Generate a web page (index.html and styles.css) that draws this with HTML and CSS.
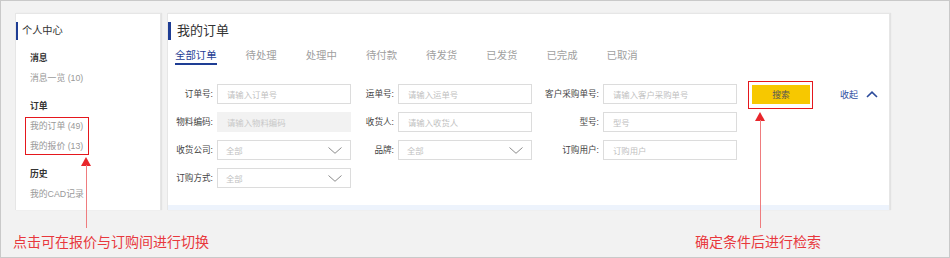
FILE: index.html
```html
<!DOCTYPE html>
<html lang="zh-CN">
<head>
  <meta charset="UTF-8">
  <title>我的订单</title>
  <link rel="stylesheet" href="styles.css">
</head>
<body>
  <div class="frame">
    <aside class="side-card">
      <div class="card-title side-title">个人中心</div>
      <div class="menu-group">
        <div class="menu-head">消息</div>
        <div class="menu-item">消息一览 (10)</div>
      </div>
      <div class="menu-group">
        <div class="menu-head">订单</div>
        <div class="menu-item">我的订单 (49)</div>
        <div class="menu-item">我的报价 (13)</div>
      </div>
      <div class="menu-group">
        <div class="menu-head">历史</div>
        <div class="menu-item">我的CAD记录</div>
      </div>
    </aside>

    <main class="order-card">
      <div class="card-title order-title">我的订单</div>

      <div class="tabs">
        <div class="tab active">全部订单</div>
        <div class="tab">待处理</div>
        <div class="tab">处理中</div>
        <div class="tab">待付款</div>
        <div class="tab">待发货</div>
        <div class="tab">已发货</div>
        <div class="tab">已完成</div>
        <div class="tab">已取消</div>
      </div>

      <div class="search-form">
        <label class="field-label">订单号:</label>
        <div class="field">请输入订单号</div>
        <label class="field-label">运单号:</label>
        <div class="field">请输入运单号</div>
        <label class="field-label">客户采购单号:</label>
        <div class="field">请输入客户采购单号</div>
        <div class="actions">
          <button class="search-btn">搜索</button>
          <span class="collapse">收起
            <svg width="12" height="7" viewBox="0 0 12 7"><polyline points="1,6 6,1.2 11,6" fill="none" stroke="#2b4a9b" stroke-width="1.6"/></svg>
          </span>
        </div>

        <label class="field-label">物料编码:</label>
        <div class="field disabled">请输入物料编码</div>
        <label class="field-label">收货人:</label>
        <div class="field">请输入收货人</div>
        <label class="field-label">型号:</label>
        <div class="field">型号</div>
        <div></div>

        <label class="field-label">收货公司:</label>
        <div class="field select">全部
          <svg width="14" height="7" viewBox="0 0 14 7"><polyline points="0.5,0.5 7,6.3 13.5,0.5" fill="none" stroke="#8c8c8c" stroke-width="1"/></svg>
        </div>
        <label class="field-label">品牌:</label>
        <div class="field select">全部
          <svg width="14" height="7" viewBox="0 0 14 7"><polyline points="0.5,0.5 7,6.3 13.5,0.5" fill="none" stroke="#8c8c8c" stroke-width="1"/></svg>
        </div>
        <label class="field-label">订购用户:</label>
        <div class="field">订购用户</div>
        <div></div>

        <label class="field-label">订购方式:</label>
        <div class="field select">全部
          <svg width="14" height="7" viewBox="0 0 14 7"><polyline points="0.5,0.5 7,6.3 13.5,0.5" fill="none" stroke="#8c8c8c" stroke-width="1"/></svg>
        </div>
      </div>

      <div class="table-head"></div>
    </main>
  </div>

  <!-- annotations drawn over the screenshot -->
  <div class="note-box note-box-menu"></div>
  <div class="note-head note-head-left"></div>
  <div class="note-line note-line-left"></div>
  <div class="note-text note-text-left">点击可在报价与订购间进行切换</div>

  <div class="note-box note-box-search"></div>
  <div class="note-head note-head-right"></div>
  <div class="note-line note-line-right"></div>
  <div class="note-text note-text-right">确定条件后进行检索</div>
</body>
</html>
```

FILE: styles.css
```css
body {
  margin: 0;
  position: relative;
  font-family: "Liberation Sans", "Noto Sans CJK SC", sans-serif;
  color: #333;
}

.frame {
  box-sizing: border-box;
  width: 950px;
  height: 258px;
  border: 1px solid #c9c9c9;
  background-color: #f2f2f2;
  padding: 12px 0 0 14px;
  display: flex;
  align-items: flex-start;
  gap: 6px;
}

.side-card,
.order-card {
  box-sizing: border-box;
  height: 197px;
  background-color: #fff;
  border: 1px solid #e6e6e6;
  border-bottom: none;
  box-shadow: 1px 0 1px #e2e2e2;
  overflow: hidden;
}

.side-card {
  width: 146px;
  padding-top: 8px;
}

.order-card {
  width: 723px;
  padding: 8px 7px 0;
  display: flex;
  flex-direction: column;
}

.card-title {
  border-left: 3px solid #1e3d94;
  height: 18px;
  line-height: 18px;
}

.side-title {
  margin-left: -1px;
  padding-left: 4px;
  font-size: 10.2px;
}

.order-title {
  margin-left: -7px;
  padding-left: 6px;
  font-size: 13px;
}

.menu-group {
  margin-top: 8px;
  padding-left: 14px;
}

.menu-head {
  line-height: 20px;
  font-size: 8.8px;
  font-weight: bold;
  color: #333;
}

.menu-item {
  line-height: 20px;
  font-size: 8.8px;
  color: #999;
}

.tabs {
  display: flex;
  gap: 29px;
  margin-top: 9px;
}

.tab {
  font-size: 10.4px;
  line-height: 14px;
  color: #a0a0a0;
  border-bottom: 2px solid transparent;
}

.tab.active {
  color: #1e3d94;
  border-bottom-color: #1e3d94;
}

.search-form {
  display: grid;
  grid-template-columns: 42px 134px 47px 134px 71px 134px 1fr;
  grid-auto-rows: 20px;
  row-gap: 8px;
  margin-top: 19px;
}

.field-label {
  text-align: right;
  padding-right: 4px;
  font-size: 8.6px;
  line-height: 20px;
  color: #444;
  white-space: nowrap;
}

.field {
  box-sizing: border-box;
  display: flex;
  align-items: center;
  justify-content: space-between;
  padding: 0 8px 0 9px;
  border: 1px solid #dcdcdc;
  background-color: #fff;
  font-size: 8.4px;
  color: #bfbfbf;
}

.field.disabled {
  background-color: #f2f2f2;
  border-color: #f2f2f2;
  color: #c8c8c8;
}

.field.select {
  padding-left: 8px;
}

.actions {
  display: flex;
  align-items: center;
}

.search-btn {
  margin-left: 15px;
  width: 58px;
  height: 19px;
  margin-top: 1px;
  border: none;
  background-color: #f7c800;
  font-family: inherit;
  font-size: 8.8px;
  color: #555;
  padding: 0;
}

.collapse {
  display: flex;
  align-items: center;
  gap: 8px;
  margin-left: 30px;
  font-size: 9px;
  color: #2f4f9f;
}

.table-head {
  margin: auto -7px 0;
  height: 5px;
  background-color: #edf3fc;
}

/* annotations */
.note-box {
  position: absolute;
  box-sizing: border-box;
  border: 1px solid #e5171d;
}

.note-box-menu {
  left: 25px;
  top: 117px;
  width: 64px;
  height: 38px;
}

.note-box-search {
  left: 748px;
  top: 81px;
  width: 65px;
  height: 28px;
}

.note-head {
  position: absolute;
  width: 0;
  height: 0;
  border-left: 5px solid transparent;
  border-right: 5px solid transparent;
  border-bottom: 9px solid #e8262b;
}

.note-head-left {
  left: 81px;
  top: 157px;
}

.note-head-right {
  left: 755px;
  top: 112px;
}

.note-line {
  position: absolute;
  width: 1px;
  background-color: #ef7c7e;
}

.note-line-left {
  left: 86px;
  top: 165px;
  height: 63px;
}

.note-line-right {
  left: 760px;
  top: 120px;
  height: 108px;
}

.note-text {
  position: absolute;
  top: 231px;
  font-family: "Noto Sans CJK SC", sans-serif;
  font-size: 14px;
  line-height: 20px;
  color: #e8383d;
}

.note-text-left {
  left: 13px;
}

.note-text-right {
  left: 695px;
}
```
